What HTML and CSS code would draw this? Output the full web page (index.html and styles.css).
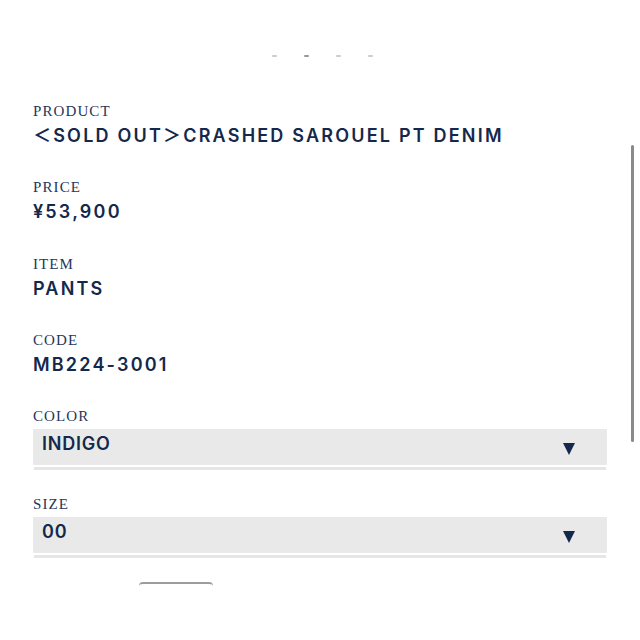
FILE: index.html
```html
<!DOCTYPE html>
<html lang="ja">
<head>
<meta charset="utf-8">
<title>Product</title>
<link rel="stylesheet" href="styles.css">
</head>
<body>
<div class="page">
  <div class="dots"><span></span><span></span><span></span><span></span></div>
  <div class="details">
    <div class="field">
      <div class="label">PRODUCT</div>
      <div class="value">＜SOLD OUT＞CRASHED SAROUEL PT DENIM</div>
    </div>
    <div class="field">
      <div class="label">PRICE</div>
      <div class="value">¥53,900</div>
    </div>
    <div class="field">
      <div class="label">ITEM</div>
      <div class="value">PANTS</div>
    </div>
    <div class="field">
      <div class="label">CODE</div>
      <div class="value">MB224-3001</div>
    </div>
    <div class="field select-field">
      <div class="label">COLOR</div>
      <div class="select"><span class="select-text">INDIGO</span><span class="arrow"></span></div>
    </div>
    <div class="field select-field">
      <div class="label">SIZE</div>
      <div class="select"><span class="select-text">00</span><span class="arrow"></span></div>
    </div>
  </div>
  <div class="button-row"><div class="button"></div></div>
  <div class="scrollbar"></div>
</div>
</body>
</html>
```
FILE: styles.css
```css
html, body {
  margin: 0;
  padding: 0;
  background: #ffffff;
}
body {
  overflow: hidden;
  height: 640px;
}
.page {
  position: relative;
  width: 640px;
  height: 640px;
}
.dots {
  display: flex;
  justify-content: center;
  gap: 27px;
  padding-top: 55px;
  height: 2px;
  padding-left: 4px;
}
.dots span {
  display: block;
  width: 5px;
  height: 2px;
  background: #cccccc;
  border-radius: 1px;
}
.dots span:nth-child(2) {
  background: #999999;
}
.details {
  padding: 44px 33px 0 33px;
  width: 574px;
}
.field {
  margin-bottom: 28.3px;
}
.label {
  font-family: "Liberation Serif", "DejaVu Serif", serif;
  font-size: 15px;
  letter-spacing: 1.1px;
  line-height: 20px;
  height: 20px;
  color: #26365a;
}
.value {
  margin-top: 2px;
  font-family: Inter, "Noto Sans CJK JP", sans-serif;
  font-weight: 600;
  font-size: 18px;
  letter-spacing: 2.2px;
  line-height: 26px;
  color: #14284c;
}
.select-field {
  margin-bottom: 27px;
}
.select {
  margin-top: 3px;
  height: 36px;
  background: #e9e9e9;
  display: flex;
  align-items: center;
  justify-content: space-between;
  padding: 0 32px 0 9px;
  border-bottom: 2px solid #ffffff;
  box-shadow: 0 4px 0 -1px #e6e6e6;
}
.select-text {
  font-family: Inter, sans-serif;
  font-weight: 600;
  font-size: 18px;
  letter-spacing: 0.8px;
  color: #14284c;
  margin-top: -8px;
}
.arrow {
  width: 0;
  height: 0;
  border-left: 6.5px solid transparent;
  border-right: 6.5px solid transparent;
  border-top: 12px solid #14284c;
  margin-top: 4px;
}
.button-row {
  padding: 0 0 0 139px;
}
.button {
  width: 74px;
  height: 3px;
  border-top: 2px solid #9c9c9c;
  border-radius: 4px 4px 0 0;
}
.scrollbar {
  position: absolute;
  left: 631px;
  top: 145px;
  width: 3px;
  height: 297px;
  border-radius: 2px;
  background: #8a8a8a;
}
```
